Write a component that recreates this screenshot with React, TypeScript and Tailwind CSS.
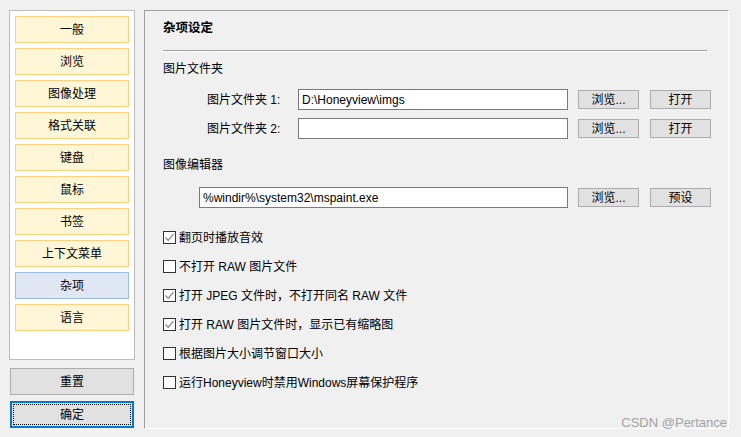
import React from 'react';

const NAV = ['一般', '浏览', '图像处理', '格式关联', '键盘', '鼠标', '书签', '上下文菜单', '杂项', '语言'];

const CHECKS: [string, boolean][] = [
  ['翻页时播放音效', true],
  ['不打开 RAW 图片文件', false],
  ['打开 JPEG 文件时，不打开同名 RAW 文件', true],
  ['打开 RAW 图片文件时，显示已有缩略图', true],
  ['根据图片大小调节窗口大小', false],
  ['运行Honeyview时禁用Windows屏幕保护程序', false],
];

function Btn({ label, ml }: { label: string; ml: string }) {
  return (
    <div
      className={`${ml} w-[61px] h-[19px] flex items-center justify-center bg-[#e1e1e1] border border-[#adadad] text-[12px] leading-none`}
    >
      {label}
    </div>
  );
}

function Check({ on }: { on: boolean }) {
  return (
    <div className="w-[13px] h-[13px] border border-[#333333] bg-white flex items-center justify-center shrink-0">
      {on && (
        <svg width="11" height="11" viewBox="0 0 11 11">
          <path d="M1.5 5.5 L4.2 8.3 L9.5 2.2" fill="none" stroke="#808080" strokeWidth="1.2" />
        </svg>
      )}
    </div>
  );
}

export default function App() {
  return (
    <div className="relative w-[741px] h-[437px] bg-[#f0f0f0] flex text-black font-['Liberation_Sans','Noto_Sans_CJK_SC',sans-serif] text-[12px]">
      {/* left column */}
      <div className="pl-[9px] pt-[10px] w-[135px] shrink-0 flex flex-col">
        <div className="h-[350px] border border-[#bcbcbc] bg-white p-[5px] flex flex-col gap-[5px]">
          {NAV.map((n) => (
            <div
              key={n}
              className={
                n === '杂项'
                  ? 'h-[27px] flex items-center justify-center border border-[#9bbbe8] bg-[#dfe7f5]'
                  : 'h-[27px] flex items-center justify-center border border-[#ffd080] bg-[#fff6d7]'
              }
            >
              {n}
            </div>
          ))}
        </div>
        <div className="mt-[8px] ml-[1px] w-[124px] h-[27px] flex items-center justify-center bg-[#e1e1e1] border border-[#adadad]">
          重置
        </div>
        <div className="mt-[6px] ml-[1px] w-[124px] h-[27px] border-2 border-[#0078d7] bg-[#e1e1e1] p-[1px] flex">
          <div className="flex-1 border border-dotted border-black flex items-center justify-center">确定</div>
        </div>
      </div>

      {/* right panel */}
      <div className="ml-[9px] mt-[10px] w-[585px] h-[419px] border-l border-t border-[#a0a0a0] border-r-white border-b-white border-r border-b flex flex-col pl-[18px]">
        <div className="mt-[8px] h-[18px] leading-[18px] font-bold text-[12.5px]">杂项设定</div>
        <div className="mt-[13px] w-[544px] h-[2px] border-t border-[#a0a0a0] border-b border-b-white" />
        <div className="mt-[8px] h-[18px] leading-[18px]">图片文件夹</div>

        <div className="mt-[11px] flex items-center">
          <div className="ml-[44px] w-[91px]">图片文件夹 1:</div>
          <div className="w-[270px] h-[21px] border border-[#7a7a7a] bg-white flex items-center pl-[3px]">D:\Honeyview\imgs</div>
          <Btn label="浏览..." ml="ml-[10px]" />
          <Btn label="打开" ml="ml-[11px]" />
        </div>
        <div className="mt-[8px] flex items-center">
          <div className="ml-[44px] w-[91px]">图片文件夹 2:</div>
          <div className="w-[270px] h-[21px] border border-[#7a7a7a] bg-white" />
          <Btn label="浏览..." ml="ml-[10px]" />
          <Btn label="打开" ml="ml-[11px]" />
        </div>

        <div className="mt-[17px] h-[18px] leading-[18px]">图像编辑器</div>
        <div className="mt-[13px] flex items-center">
          <div className="ml-[36px] w-[369px] h-[21px] border border-[#7a7a7a] bg-white flex items-center pl-[3px]">
            %windir%\system32\mspaint.exe
          </div>
          <Btn label="浏览..." ml="ml-[10px]" />
          <Btn label="预设" ml="ml-[11px]" />
        </div>

        <div className="mt-[15px] flex flex-col">
          {CHECKS.map(([t, on]) => (
            <div key={t} className="h-[29px] flex items-center gap-[3px]">
              <Check on={on} />
              <span>{t}</span>
            </div>
          ))}
        </div>
      </div>

      <div className="absolute right-[14px] bottom-[8px] text-[13px] leading-none text-[#a3a3a3] font-['Liberation_Sans',sans-serif]">
        CSDN @Pertance
      </div>
    </div>
  );
}
